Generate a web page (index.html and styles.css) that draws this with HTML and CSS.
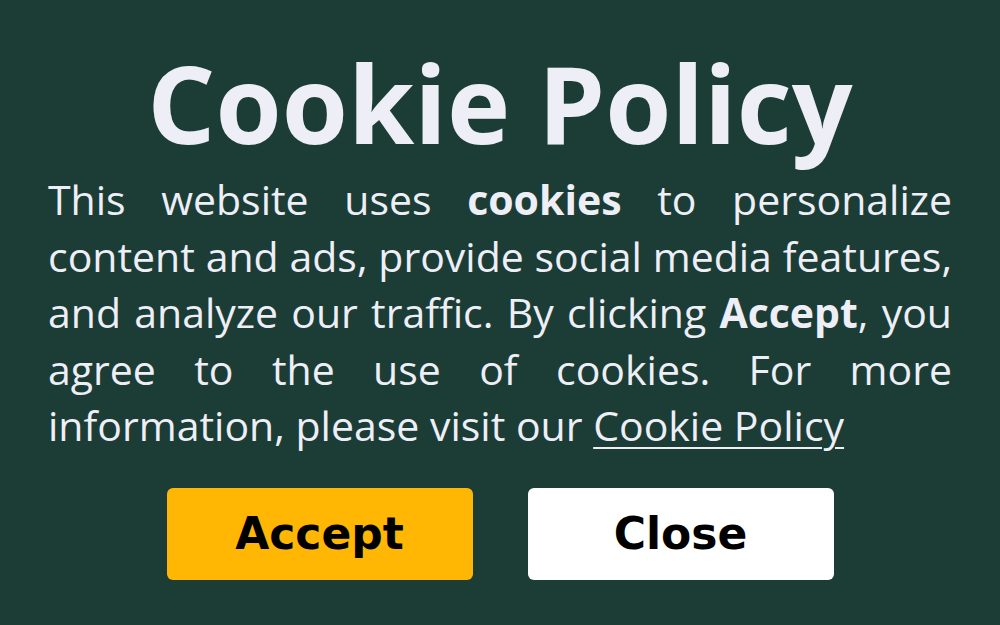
FILE: index.html
```html
<!DOCTYPE html>
<html lang="en">
<head>
<meta charset="utf-8">
<title>Cookie Policy</title>
<link rel="stylesheet" href="styles.css">
</head>
<body>
<main class="banner">
  <h1 class="title">Cookie Policy</h1>
  <p class="text">This website uses <strong>cookies</strong> to personalize content and ads, provide social media features, and analyze our traffic. By clicking <strong>Accept</strong>, you agree to the use of cookies. For more information, please visit our <a href="#" class="link">Cookie Policy</a></p>
  <div class="actions">
    <button class="btn btn-accept">Accept</button>
    <button class="btn btn-close">Close</button>
  </div>
</main>
</body>
</html>
```
FILE: styles.css
```css
html, body {
  margin: 0;
  padding: 0;
  height: 100%;
}
body {
  background: #1b3d36;
  color: #eeeef6;
  font-family: "Open Sans", "Liberation Sans", sans-serif;
  overflow: hidden;
}
.banner {
  padding: 34px 48px 0;
  display: flex;
  flex-direction: column;
  align-items: stretch;
}
.title {
  margin: 0;
  text-align: center;
  font-size: 107px;
  font-weight: 700;
  line-height: 137px;
}
.text {
  margin: 0;
  font-size: 41px;
  line-height: 56.5px;
  text-align: justify;
}
.text strong {
  font-weight: 700;
}
.link {
  color: inherit;
  text-decoration: underline;
  text-decoration-thickness: 2px;
  text-underline-offset: 6px;
}
.actions {
  display: flex;
  justify-content: center;
  gap: 55px;
  margin-top: 34px;
}
.btn {
  width: 306px;
  height: 92px;
  border: none;
  border-radius: 6px;
  font-family: "DejaVu Sans", "Liberation Sans", sans-serif;
  font-weight: 700;
  font-size: 44px;
  color: #000;
  cursor: pointer;
}
.btn-accept {
  background: #ffb703;
}
.btn-close {
  background: #ffffff;
}
```
